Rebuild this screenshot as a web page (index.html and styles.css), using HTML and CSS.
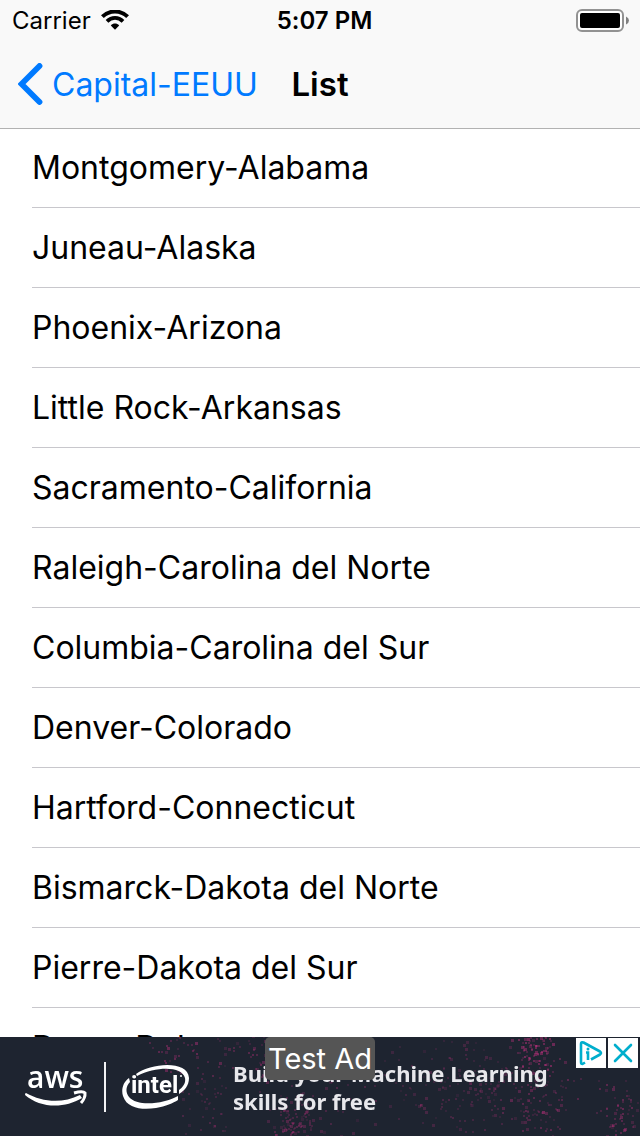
FILE: index.html
```html
<!DOCTYPE html>
<html lang="es">
<head>
<meta charset="utf-8">
<meta name="viewport" content="width=device-width, initial-scale=1">
<title>List</title>
<link rel="stylesheet" href="styles.css">
</head>
<body>
<div class="app">
  <header class="top">
    <div class="status">
      <div class="carrier">
        <span>Carrier</span>
        <svg class="wifi" width="28" height="20" viewBox="0 0 28 20" aria-hidden="true">
          <path d="M1.400 6.600C8.400-.2 19.600-.2 26.600 6.600" fill="none" stroke="#000" stroke-width="4"/>
          <path d="M6 11.300C10.600 6.800 17.400 6.800 22 11.300" fill="none" stroke="#000" stroke-width="3.800"/>
          <path d="M9.800 15.400C12.200 13 15.800 13 18.200 15.400L14 19.800Z"/>
        </svg>
      </div>
      <span class="time">5:07 PM</span>
      <svg class="battery" width="53" height="23" viewBox="0 0 53 23" aria-hidden="true">
        <rect x="1" y="1" width="46" height="21" rx="5" fill="#fff" stroke="#929292" stroke-width="2"/>
        <rect x="4" y="4" width="40" height="15" rx="2"/>
        <path d="M50 7.500Q53 9 53 11.500Q53 14 50 15.500Z" fill="#808080"/>
      </svg>
    </div>
    <nav class="bar">
      <button class="back" type="button">
        <svg width="26" height="42" viewBox="0 0 26 42" aria-hidden="true">
          <path d="M21.500 3L3.500 21L21.500 39" fill="none" stroke="#007aff" stroke-width="5.800" stroke-linecap="round" stroke-linejoin="miter"/>
        </svg>
        <span>Capital-EEUU</span>
      </button>
      <h1 class="title">List</h1>
    </nav>
  </header>
  <main class="content">
    <ul class="list">
      <li class="row">Montgomery-Alabama</li>
      <li class="row">Juneau-Alaska</li>
      <li class="row">Phoenix-Arizona</li>
      <li class="row">Little Rock-Arkansas</li>
      <li class="row">Sacramento-California</li>
      <li class="row">Raleigh-Carolina del Norte</li>
      <li class="row">Columbia-Carolina del Sur</li>
      <li class="row">Denver-Colorado</li>
      <li class="row">Hartford-Connecticut</li>
      <li class="row">Bismarck-Dakota del Norte</li>
      <li class="row">Pierre-Dakota del Sur</li>
      <li class="row">Dover-Delaware</li>
    </ul>
  </main>
  <aside class="ad">
    <canvas class="specks" width="640" height="99"></canvas>
    <div class="brands">
      <svg width="66" height="50" viewBox="0 0 66 50" role="img" aria-label="aws">
        <text class="aws" x="3" y="26">aws</text>
        <path d="M2 31C18 40 38 42 56 33L58 36C40 47 16 46 1 33Q1 31 2 31Z" fill="#fff"/>
        <path d="M50 31Q59 28.500 61 31Q61.500 36 57 41" fill="none" stroke="#fff" stroke-width="3" stroke-linejoin="round"/>
      </svg>
      <span class="divider"></span>
      <svg width="68" height="50" viewBox="0 0 68 50" role="img" aria-label="intel">
        <path d="M14 12C29 1 66-2 67 16C67 24 62 29 57 32V28C61 25 64 21 63 16C60 4 35 4 15 14Z" fill="#fff"/>
        <path d="M7 16C1 20-1 28 1 34C5 47 21 48 34 46C44 44.500 51 41 56 38V34C42 42 15 45 7 35C3 30 4 24 8 20Z" fill="#fff"/>
        <text class="intel" x="9" y="31">intel</text>
        <circle cx="59" cy="14" r="1" fill="#fff"/>
      </svg>
    </div>
    <p class="pitch">Build your Machine Learning skills for free</p>
    <span class="badge">Test Ad</span>
    <div class="choices">
      <button class="choice" type="button" aria-label="Ad choices">
        <svg width="30" height="30" viewBox="0 0 30 30">
          <path d="M9 24.500L6.500 26Q5 26 5 24V6Q5 3.500 7.500 4.500L24 13.500Q26 15 24 16.500L15 21.500" fill="none" stroke="#00aecd" stroke-width="2.600" stroke-linejoin="round"/>
          <path d="M10 14.500H12V22" fill="none" stroke="#00aecd" stroke-width="2.600"/>
          <circle cx="12" cy="11" r="1.500" fill="#00aecd"/>
        </svg>
      </button>
      <button class="choice" type="button" aria-label="Close ad">
        <svg width="30" height="30" viewBox="0 0 30 30">
          <path d="M7 7L23 23M23 7L7 23" fill="none" stroke="#00aecd" stroke-width="2.600" stroke-linecap="round"/>
        </svg>
      </button>
    </div>
  </aside>
</div>
<script src="specks.js"></script>
</body>
</html>
```
FILE: styles.css
```css
* {
  box-sizing: border-box;
}

body {
  margin: 0;
  background: #fff;
  color: #000;
  font-family: Inter, "Liberation Sans", sans-serif;
  font-variant-ligatures: none;
}

button {
  margin: 0;
  padding: 0;
  border: 0;
  background: none;
  font: inherit;
}

.app {
  display: flex;
  flex-direction: column;
  height: 100vh;
}

.top {
  position: relative;
  z-index: 1;
  flex: none;
  background: #f9f9f9;
  box-shadow: 0 1px 0 #b2b2b2;
}

.status {
  display: grid;
  grid-template-columns: 1fr auto 1fr;
  align-items: center;
  height: 40px;
  padding: 0 11px 0 12px;
  font-size: 24px;
}

.carrier {
  display: flex;
  align-items: center;
  gap: 10px;
}

.time {
  padding-left: 8px;
  font-weight: 600;
}

.battery {
  justify-self: end;
}

.bar {
  display: grid;
  grid-template-columns: 1fr auto 1fr;
  align-items: center;
  height: 88px;
  padding: 0 18px;
  font-size: 32px;
}

.back {
  display: flex;
  align-items: center;
  gap: 8px;
  color: #007aff;
  white-space: nowrap;
}

.title {
  margin: 0;
  font-size: 33px;
  font-weight: 600;
}

.content {
  flex: 1;
  min-height: 0;
  overflow: hidden;
}

.list {
  margin: 0;
  padding: 0 0 0 32px;
  list-style: none;
}

.row {
  display: flex;
  align-items: center;
  height: 80px;
  padding-bottom: 1px;
  border-bottom: 1px solid #c8c7cc;
  font-size: 32px;
}

.ad {
  position: relative;
  display: flex;
  flex: none;
  align-items: center;
  gap: 43px;
  min-height: 99px;
  padding: 0 24px;
  background: #1e2430;
  color: #e8e8ec;
}

.specks {
  position: absolute;
  inset: 0;
  width: 100%;
  height: 100%;
}

.brands {
  position: relative;
  display: flex;
  align-items: center;
  gap: 16px;
}

.divider {
  width: 2px;
  height: 50px;
  margin-left: -2px;
  background: #f2f2f4;
}

.aws,
.intel {
  fill: #fff;
  font-family: "Open Sans", sans-serif;
  font-size: 30px;
  font-weight: 600;
}

.intel {
  font-family: Roboto, sans-serif;
  font-size: 24px;
  font-weight: 700;
}

.pitch {
  position: relative;
  max-width: 340px;
  margin: 0;
  font-family: "Noto Sans", sans-serif;
  font-size: 22px;
  font-weight: 700;
  line-height: 28px;
}

.badge {
  position: absolute;
  top: 0;
  left: 50%;
  width: 110px;
  border-radius: 5px;
  background: #555;
  color: #fff;
  font-size: 29px;
  line-height: 43px;
  text-align: center;
  white-space: nowrap;
  transform: translateX(-50%);
}

.choices {
  position: absolute;
  top: 1px;
  right: 2px;
  display: flex;
  gap: 2px;
}

.choice {
  width: 30px;
  height: 30px;
  background: #fff;
}

.choice svg {
  display: block;
}
```
FILE: specks.js
```js
// Scatters the magenta specks over the banner background.
const canvas = document.querySelector(".specks");
const ctx = canvas.getContext("2d");
let seed = 7;

function random() {
  seed = (seed * 16807) % 2147483647;
  return seed / 2147483647;
}

// Each cluster: x, y, horizontal spread, vertical spread, count, strength.
const clusters = [
  [175, 8, 35, 35, 45, 0.3],
  [205, 60, 30, 45, 45, 0.2],
  [250, 15, 40, 35, 65, 0.25],
  [292, 85, 22, 26, 90, 0.22],
  [310, 60, 60, 45, 60, 0.2],
  [535, 12, 26, 30, 90, 0.34],
  [540, 65, 45, 45, 100, 0.25],
  [620, 75, 28, 40, 65, 0.28],
  [460, 50, 110, 60, 180, 0.18]
];

for (const [cx, cy, sx, sy, count, strength] of clusters) {
  for (let i = 0; i < count; i++) {
    const x = cx + (random() + random() - 1) * sx;
    const y = cy + (random() + random() - 1) * sy;
    const size = random() < 0.25 ? 3 : 2;
    ctx.fillStyle = `rgba(190, 48, 125, ${strength * (0.5 + random())})`;
    ctx.fillRect(Math.round(x), Math.round(y), size, size);
  }
}
```
